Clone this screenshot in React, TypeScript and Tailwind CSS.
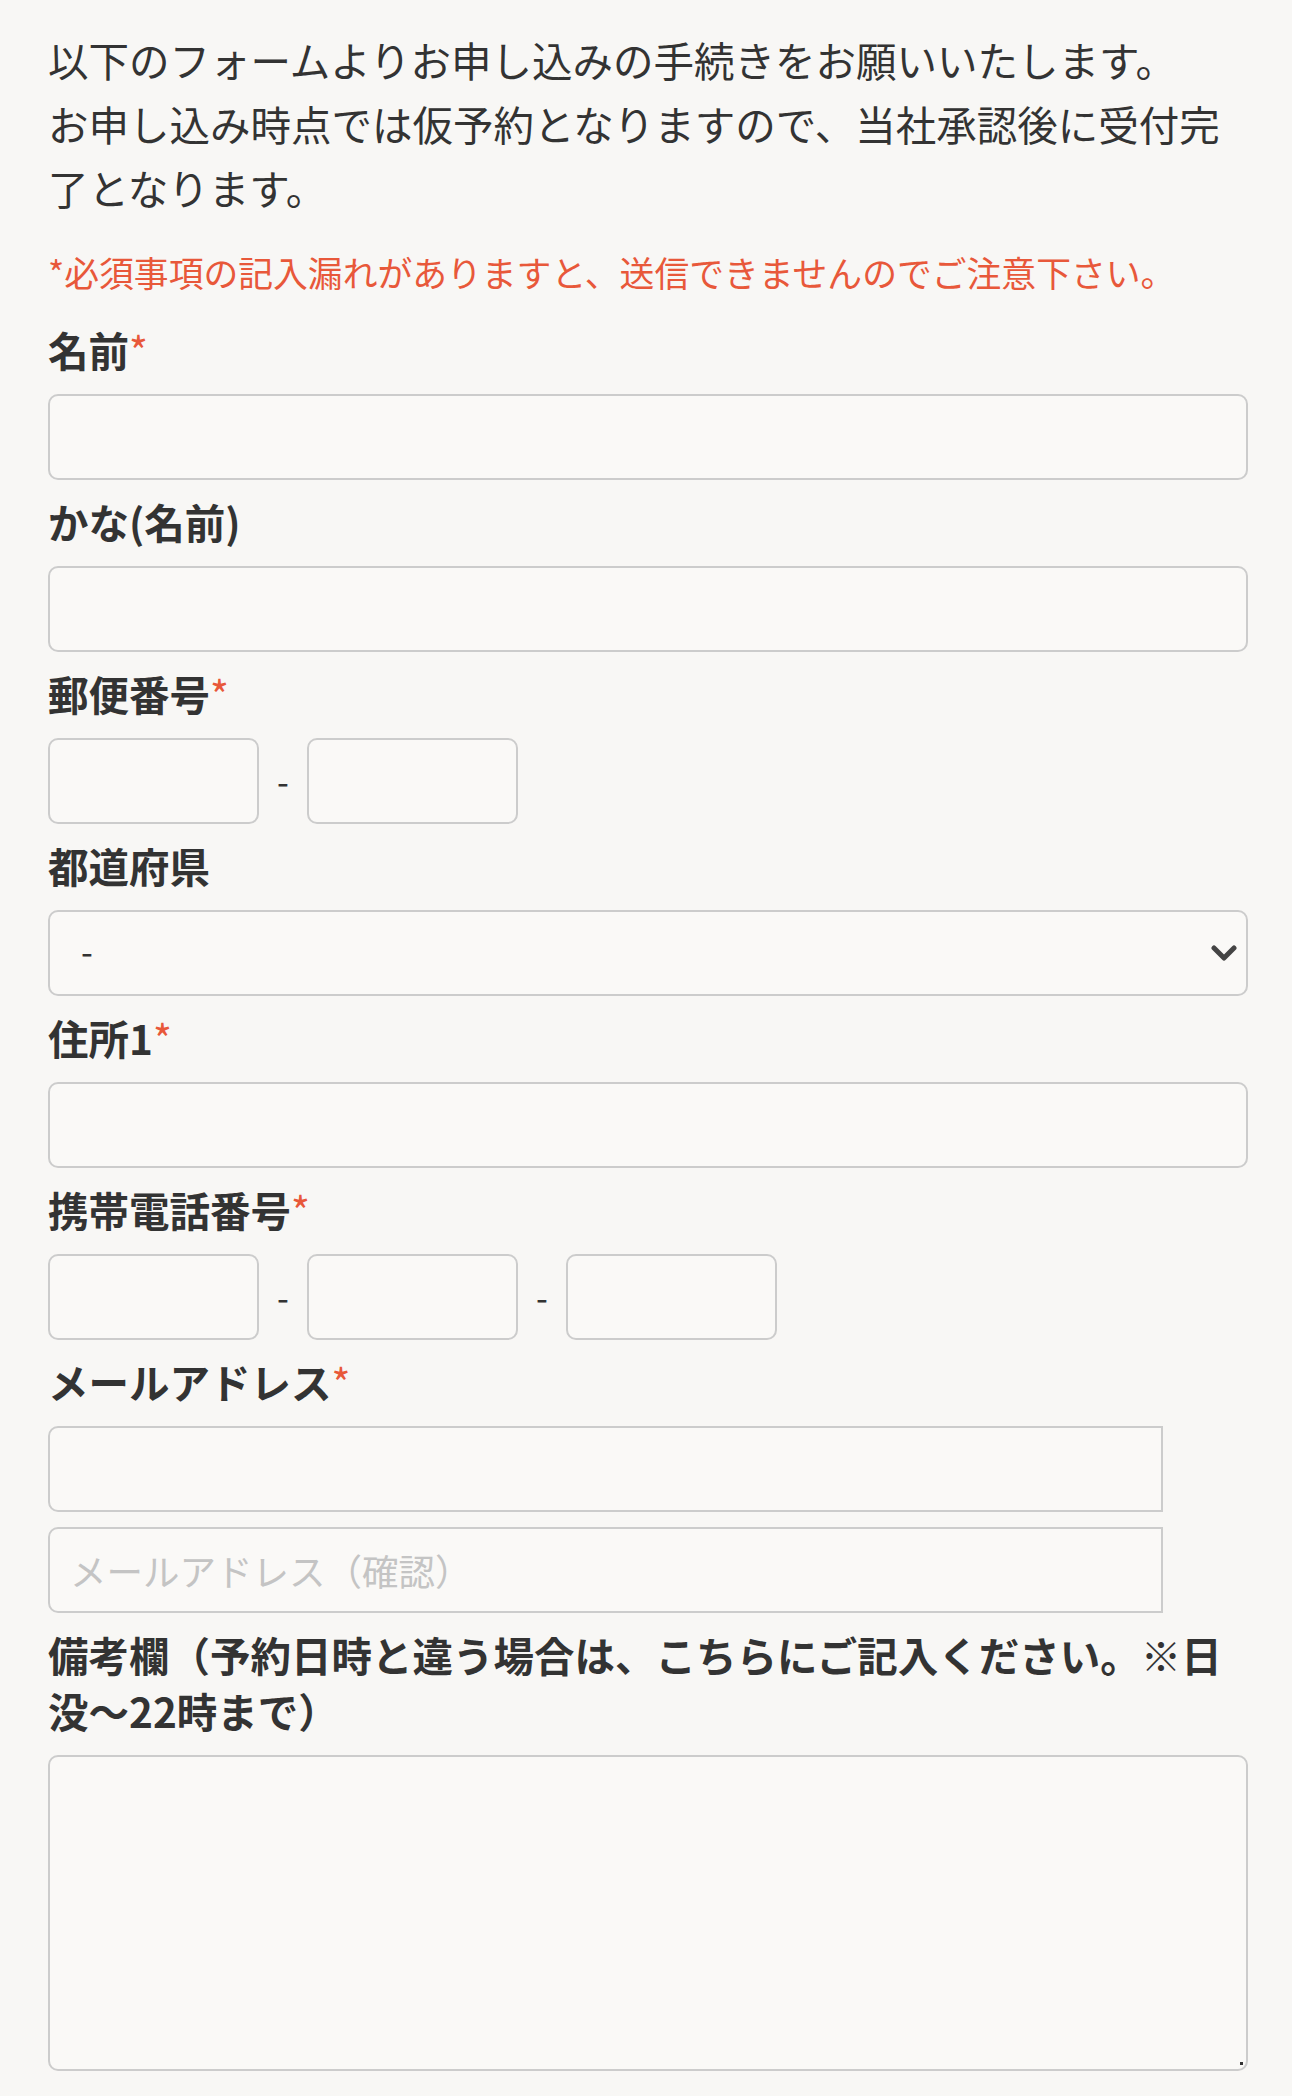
import React from "react";

const Req = () => <span className="font-normal text-[#e8583a]">*</span>;

const Label = ({ children, first }: { children: React.ReactNode; first?: boolean }) => (
  <div
    className={`${first ? "mt-[24px]" : "mt-[14px]"} mb-[16px] text-[40.5px] leading-[56px] font-bold text-[#333333]`}
  >
    {children}
  </div>
);

const inputCls =
  "block h-[86px] border-2 border-[#cccccc] bg-[#faf9f7] rounded-[10px] px-[20px] text-[34px] text-[#333333] outline-none";

const Dash = () => <span className="mx-[16px] w-[16px] text-center text-[34px] leading-none text-[#333333]">-</span>;

export default function App() {
  return (
    <div className="min-h-screen w-full overflow-hidden bg-[#f8f7f5] font-['Noto_Sans_CJK_JP','Noto_Sans',sans-serif]">
      <div className="w-[1296px] px-[48px] pt-[28px] pb-[8px]">
        <p className="text-[40.5px] leading-[64px] text-[#333333]">
          以下のフォームよりお申し込みの手続きをお願いいたします。
          <br />
          お申し込み時点では仮予約となりますので、当社承認後に受付完
          <br />
          了となります。
        </p>
        <p className="mt-[26px] text-[34.8px] leading-[52px] text-[#e8583a]">
          *必須事項の記入漏れがありますと、送信できませんのでご注意下さい。
        </p>

        <Label first>
          名前<Req />
        </Label>
        <input className={`${inputCls} w-[1200px]`} />

        <Label>かな(名前)</Label>
        <input className={`${inputCls} w-[1200px]`} />

        <Label>
          郵便番号<Req />
        </Label>
        <div className="flex items-center">
          <input className={`${inputCls} w-[211px]`} />
          <Dash />
          <input className={`${inputCls} w-[211px]`} />
        </div>

        <Label>都道府県</Label>
        <div className="relative w-[1200px]">
          <select className={`${inputCls} w-[1200px] appearance-none pl-[31px] pb-[6px]`} defaultValue="-">
            <option value="-">-</option>
          </select>
          <svg
            className="pointer-events-none absolute right-[11px] top-[35px]"
            width="26"
            height="17"
            viewBox="0 0 26 17"
          >
            <polyline points="3,3 13,13 23,3" fill="none" stroke="#444444" strokeWidth="5" strokeLinecap="round" strokeLinejoin="round" />
          </svg>
        </div>

        <Label>
          住所1<Req />
        </Label>
        <input className={`${inputCls} w-[1200px]`} />

        <Label>
          携帯電話番号<Req />
        </Label>
        <div className="flex items-center">
          <input className={`${inputCls} w-[211px]`} />
          <Dash />
          <input className={`${inputCls} w-[211px]`} />
          <Dash />
          <input className={`${inputCls} w-[211px]`} />
        </div>

        <Label>
          メールアドレス<Req />
        </Label>
        <input className="block h-[86px] w-[1115px] border-2 border-[#cccccc] bg-[#faf9f7] rounded-l-[10px] px-[20px] text-[36.5px] text-[#333333] outline-none" />
        <input
          placeholder="メールアドレス（確認）"
          className="mt-[15px] block h-[86px] w-[1115px] border-2 border-[#cccccc] bg-[#faf9f7] rounded-l-[10px] px-[20px] text-[36.5px] text-[#333333] placeholder:text-[#c4c4c4] outline-none"
        />

        <Label>備考欄（予約日時と違う場合は、こちらにご記入ください。※日没～22時まで）</Label>
        <div className="relative w-[1200px]">
          <textarea className="block h-[316px] w-[1200px] resize-none border-2 border-[#cccccc] bg-[#faf9f7] rounded-[10px] px-[20px] py-[12px] text-[34px] text-[#333333] outline-none" />
          <span className="absolute right-[5px] bottom-[6px] h-[3px] w-[3px] bg-[#333333]" />
        </div>
      </div>
    </div>
  );
}
